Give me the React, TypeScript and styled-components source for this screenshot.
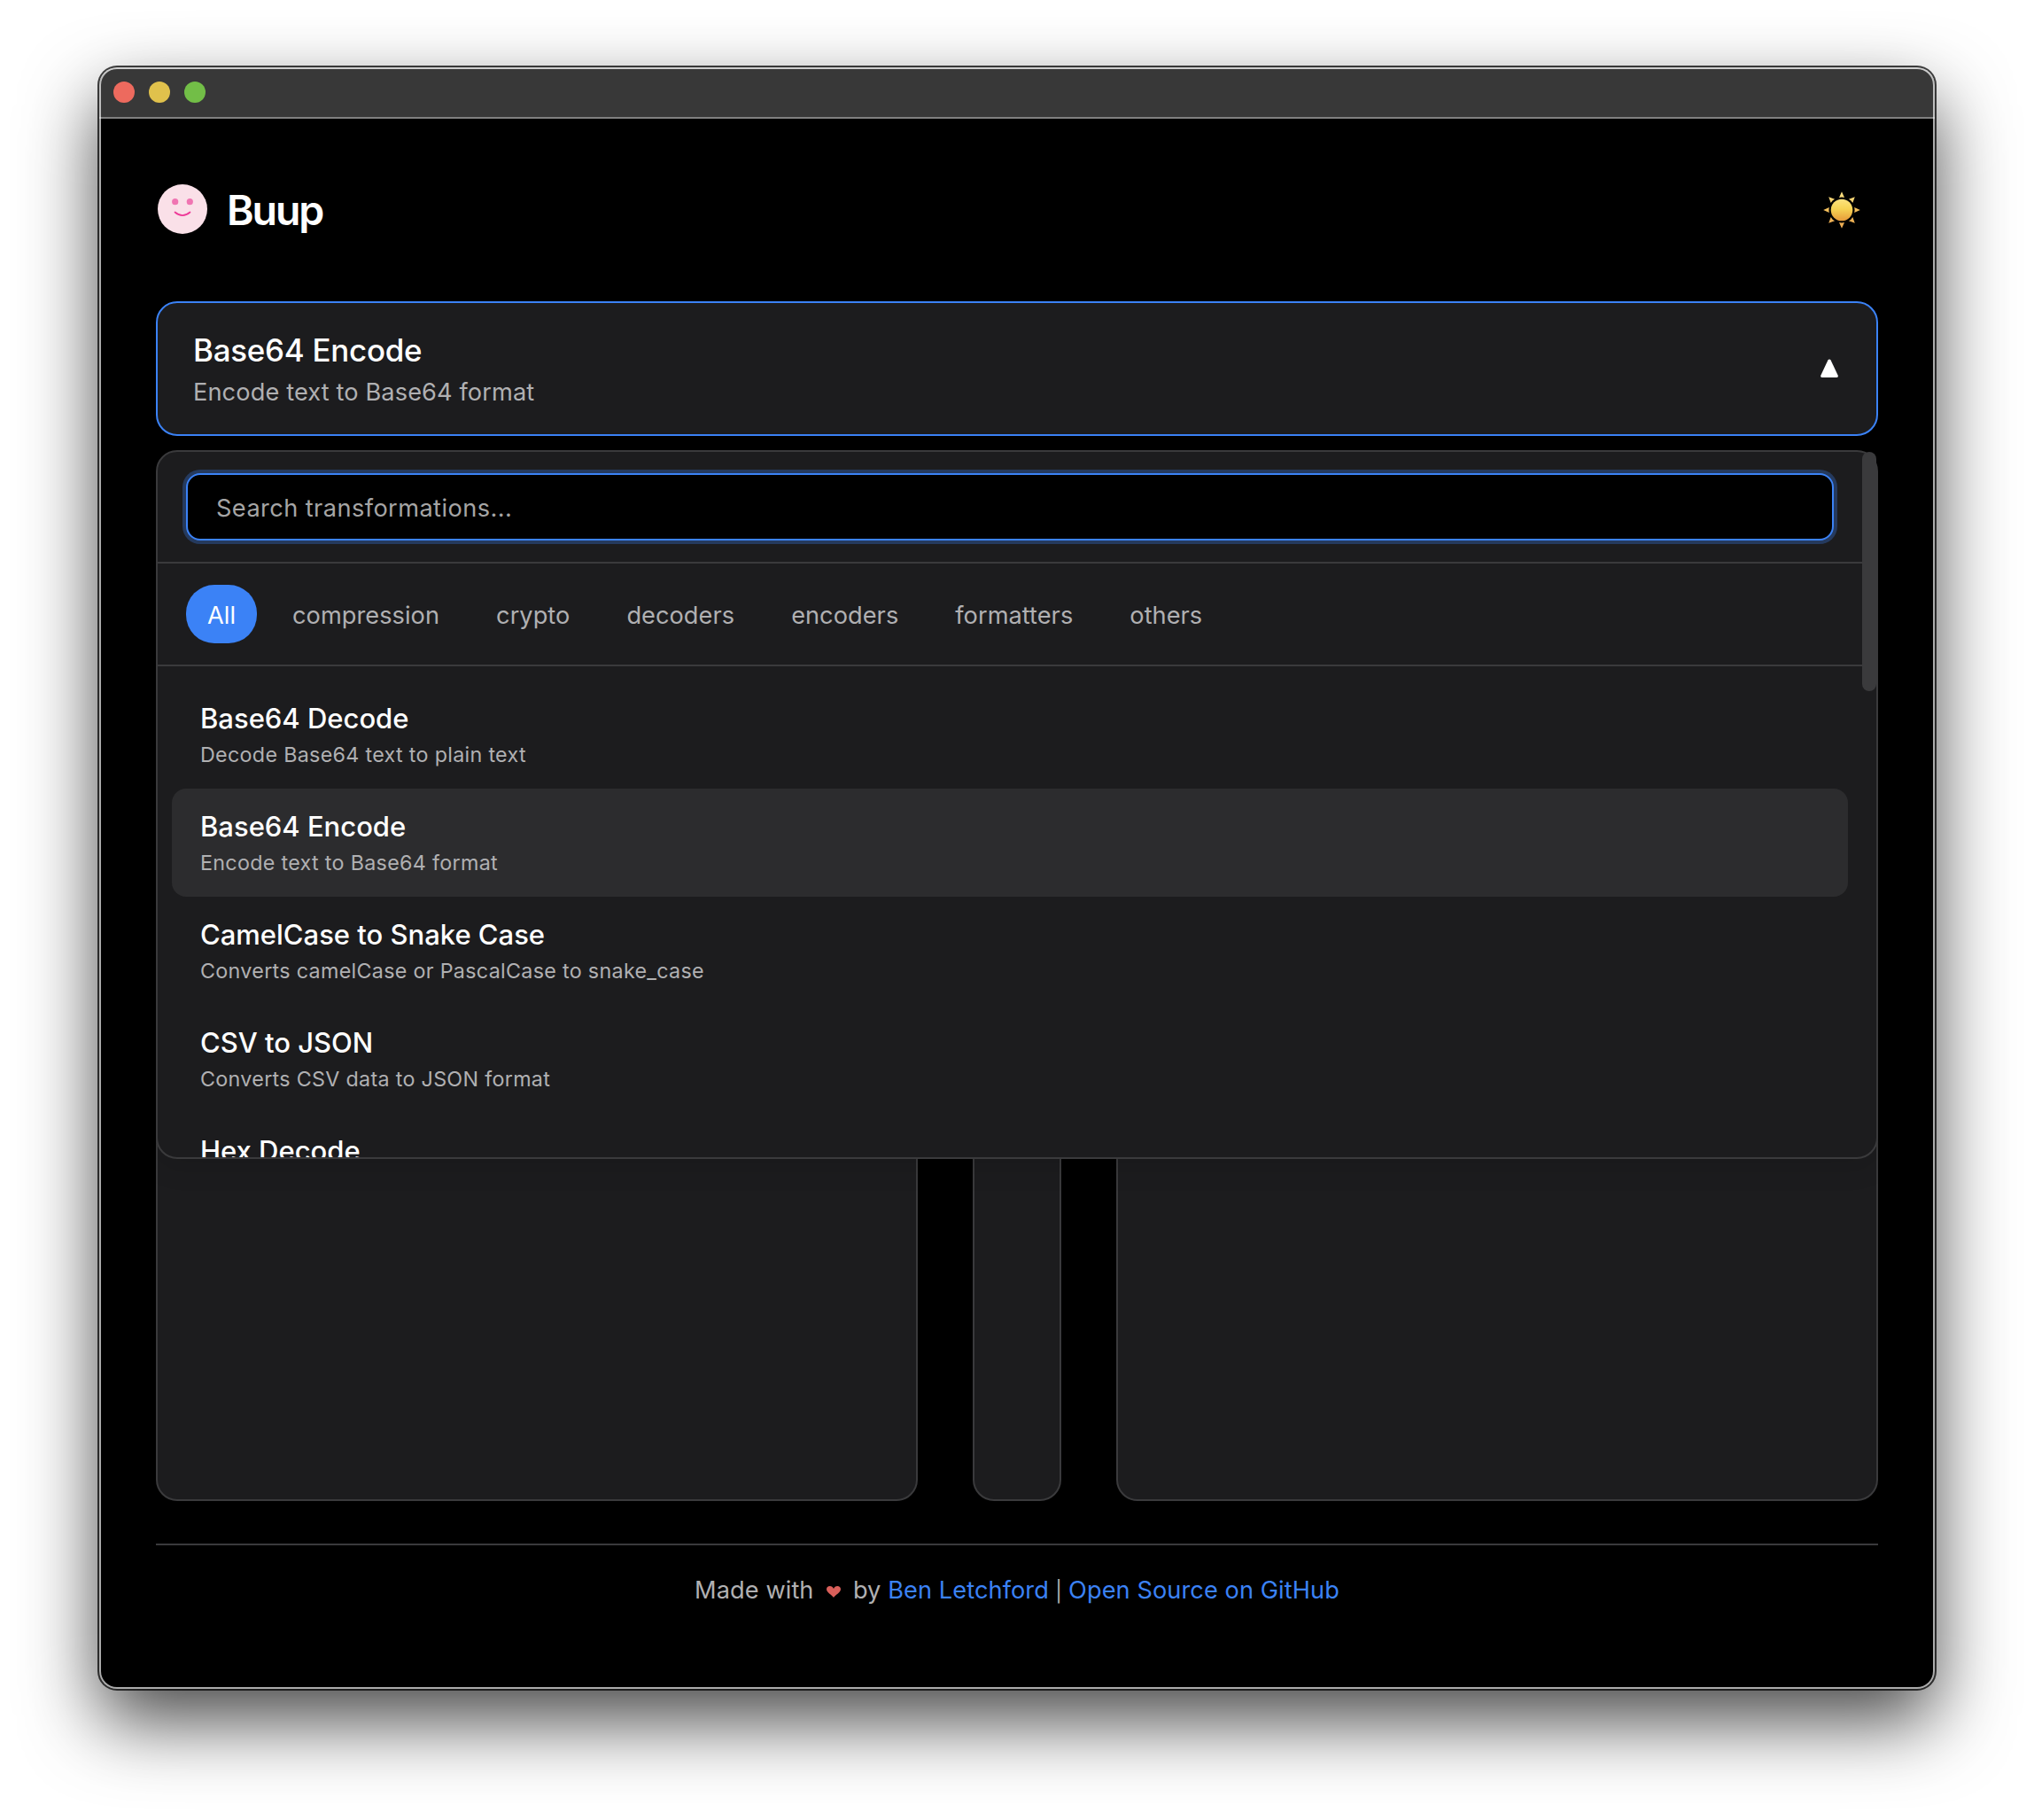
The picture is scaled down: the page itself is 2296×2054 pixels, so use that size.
import React, { useState } from "react";
import styled, { createGlobalStyle, css } from "styled-components";

const color = {
  accent: "#3b82f6",
  surface: "#1c1c1e",
  surfaceActive: "#2c2c2e",
  line: "#3a3a3c",
  text: "#ffffff",
  muted: "#b0b0b2",
  placeholder: "#a5a5a5",
};

const GlobalStyle = createGlobalStyle`
  *, *::before, *::after { box-sizing: border-box; }
  body {
    margin: 0;
    background: #fff;
    font-family: Inter, "Liberation Sans", sans-serif;
    -webkit-font-smoothing: antialiased;
  }
`;

const Desktop = styled.div`
  width: 2296px;
  height: 2054px;
  padding: 76px 112px 148px;
  display: flex;
  overflow: hidden;
  background: #fff;
`;

const Window = styled.div`
  position: relative;
  flex: 1;
  display: flex;
  flex-direction: column;
  border-radius: 20px;
  background: #000;
  box-shadow: 0 0 0 2px rgba(0, 0, 0, 0.74), 0 36px 84px rgba(0, 0, 0, 0.72);

  &::after {
    content: "";
    position: absolute;
    inset: 0;
    border-radius: inherit;
    box-shadow: inset 0 0 0 2px rgba(255, 255, 255, 0.67);
    pointer-events: none;
  }
`;

const TitleBar = styled.div`
  height: 58px;
  display: flex;
  align-items: center;
  gap: 16px;
  padding-left: 16px;
  border-top: 2px solid #6c6c6c;
  border-bottom: 2px solid #808080;
  border-radius: 20px 20px 0 0;
  background: #383838;
`;

const WindowButton = styled.span<{ $fill: string }>`
  width: 24px;
  height: 24px;
  margin-top: -2px;
  border-radius: 50%;
  background: ${(p) => p.$fill};
`;

const Content = styled.div`
  flex: 1;
  display: flex;
  flex-direction: column;
  padding: 74px 64px 92px;
`;

const Header = styled.header`
  height: 56px;
  display: flex;
  align-items: center;
  justify-content: space-between;
  margin-bottom: 76px;
`;

const Brand = styled.div`
  display: flex;
  align-items: center;
  gap: 22px;
  padding-left: 2px;
`;

const BrandName = styled.h1`
  margin: 0;
  padding-top: 2px;
  font-size: 46.5px;
  font-weight: 600;
  line-height: 56px;
  letter-spacing: -2.1px;
  color: ${color.text};
`;

const ThemeButton = styled.button`
  display: flex;
  margin: 2px 0 0;
  padding: 0 20px;
  border: 0;
  background: none;
`;

const SelectorArea = styled.div`
  position: relative;
  z-index: 1;
`;

const Selector = styled.div`
  height: 152px;
  display: flex;
  align-items: center;
  justify-content: space-between;
  padding: 0 43px 0 40px;
  border: 2px solid ${color.accent};
  border-radius: 24px;
  background: ${color.surface};
`;

const SelectorTitle = styled.div`
  font-size: 34.9px;
  font-weight: 500;
  line-height: 54px;
  letter-spacing: -0.24px;
  color: ${color.text};
`;

const SelectorHint = styled.div`
  font-size: 27.2px;
  line-height: 42px;
  letter-spacing: 0.11px;
  color: ${color.muted};
`;

const Dropdown = styled.div`
  position: absolute;
  top: calc(100% + 16px);
  left: 0;
  right: 0;
  height: 800px;
  display: flex;
  border: 2px solid ${color.line};
  border-radius: 24px;
  background: ${color.surface};
  box-shadow: 0 8px 32px rgba(0, 0, 0, 0.12);
`;

const DropdownBody = styled.div`
  flex: 1;
  overflow: hidden;
  border-radius: 22px 0 0 22px;
`;

const ScrollThumb = styled.div`
  width: 16px;
  height: 270px;
  border-radius: 8px;
  background: ${color.line};
`;

const SearchSection = styled.div`
  padding: 24px 32px;
  border-bottom: 2px solid ${color.line};
`;

const SearchInput = styled.input`
  display: block;
  width: 100%;
  height: 76px;
  padding: 2px 32px 0;
  border: 2px solid ${color.accent};
  border-radius: 16px;
  outline: none;
  background: #000;
  box-shadow: 0 0 0 4px rgba(59, 130, 246, 0.3);
  font: 400 27.2px Inter, "Liberation Sans", sans-serif;
  letter-spacing: 0.42px;
  color: ${color.text};

  &::placeholder {
    color: ${color.placeholder};
    opacity: 1;
  }
`;

const Categories = styled.div`
  display: flex;
  gap: 16px;
  padding: 24px 32px;
  border-bottom: 2px solid ${color.line};
`;

const Category = styled.button<{ $active: boolean }>`
  height: 66px;
  padding: 2px 24px 0;
  border: 0;
  border-radius: 32px;
  background: none;
  font: 400 27.2px Inter, "Liberation Sans", sans-serif;
  letter-spacing: 0.04px;
  color: ${color.muted};

  ${(p) =>
    p.$active &&
    css`
      background: ${color.accent};
      color: ${color.text};
    `}
`;

const List = styled.ul`
  margin: 0;
  padding: 16px;
  list-style: none;
`;

const Item = styled.li<{ $selected: boolean }>`
  height: 122px;
  display: flex;
  flex-direction: column;
  justify-content: center;
  padding: 0 32px;
  border-radius: 16px;
  background: ${(p) => (p.$selected ? color.surfaceActive : "transparent")};
`;

const ItemTitle = styled.div`
  font-size: 31px;
  font-weight: 500;
  line-height: 45px;
  letter-spacing: -0.01px;
  color: ${color.text};
`;

const ItemHint = styled.div`
  font-size: 23.3px;
  line-height: 37px;
  letter-spacing: 0.3px;
  color: ${color.muted};
`;

const Panels = styled.div`
  flex: 1;
  display: grid;
  grid-template-columns: 1fr 100px 1fr;
  gap: 62px;
  margin-top: 48px;
`;

const Panel = styled.section`
  border: 2px solid ${color.line};
  border-radius: 24px;
  background: ${color.surface};
`;

const Footer = styled.footer`
  height: 72px;
  margin-top: 48px;
  padding-top: 31px;
  border-top: 2px solid ${color.line};
  text-align: center;
  font-size: 27.2px;
  line-height: 40px;
  letter-spacing: 0.07px;
  color: ${color.muted};
`;

const FooterLink = styled.a`
  color: ${color.accent};
  text-decoration: none;
`;

const Divider = styled.span`
  margin: 0 -0.5px;
  font-size: 23px;
`;

const HeartIcon = styled.svg`
  width: 16px;
  height: 13px;
  margin: 0 6.5px;
  vertical-align: 1px;
`;

const Logo = () => (
  <svg width="56" height="56" viewBox="0 0 56 56">
    <circle cx="28" cy="28" r="28" fill="#fae0e8" />
    <circle cx="19.7" cy="19.7" r="3.6" fill="#f075b2" />
    <circle cx="36.3" cy="19.7" r="3.6" fill="#f075b2" />
    <path d="M19.5 31.5Q28 38.7 36.5 31.5" fill="none" stroke="#ee3a98" strokeWidth="1.7" strokeLinecap="round" />
  </svg>
);

const Sun = () => (
  <svg width="42" height="42" viewBox="-21 -21 42 42">
    <defs>
      <linearGradient id="disc" x1="0" y1="0" x2="0" y2="1">
        <stop offset="0" stopColor="#fbe27e" />
        <stop offset="0.45" stopColor="#f6d353" />
        <stop offset="1" stopColor="#e79a3a" />
      </linearGradient>
      <linearGradient id="ray" gradientUnits="userSpaceOnUse" x1="0" y1="-20" x2="0" y2="20">
        <stop offset="0" stopColor="#fbe283" />
        <stop offset="0.5" stopColor="#f3bf5c" />
        <stop offset="1" stopColor="#eba951" />
      </linearGradient>
    </defs>
    <circle r="12.3" fill="url(#disc)" />
    <path
      fill="url(#ray)"
      d="M0-20.8L3-14.1Q0-15-3-14.1ZM0 20.8L3 14.1Q0 15-3 14.1ZM-20.8 0L-14.1-3Q-15 0-14.1 3ZM20.8 0L14.1-3Q15 0 14.1 3ZM-14.8-14.8L-7.9-12.3Q-10.800-10.800-12.300-7.900ZM14.800-14.800L7.900-12.300Q10.800-10.800 12.300-7.900ZM-14.800 14.800L-7.900 12.300Q-10.800 10.800-12.300 7.900ZM14.800 14.800L7.900 12.300Q10.800 10.800 12.300 7.900Z"
    />
  </svg>
);

const Caret = () => (
  <svg width="20" height="22" viewBox="0 0 20 22">
    <path
      d="M8.4 1.6Q10-.4 11.6 1.6L19.6 18.6Q20.4 21 18 21H2Q-.4 21 .4 18.6Z"
      fill="#fff"
    />
  </svg>
);

const categories = ["All", "compression", "crypto", "decoders", "encoders", "formatters", "others"];

const transformations = [
  { name: "Base64 Decode", hint: "Decode Base64 text to plain text" },
  { name: "Base64 Encode", hint: "Encode text to Base64 format" },
  { name: "CamelCase to Snake Case", hint: "Converts camelCase or PascalCase to snake_case" },
  { name: "CSV to JSON", hint: "Converts CSV data to JSON format" },
  { name: "Hex Decode", hint: "" },
];

export default function App() {
  const [category, setCategory] = useState("All");
  const [selected, setSelected] = useState(1);
  const current = transformations[selected];

  return (
    <Desktop>
      <GlobalStyle />
      <Window>
        <TitleBar>
          <WindowButton $fill="#ed6a5e" />
          <WindowButton $fill="#e0c14c" />
          <WindowButton $fill="#72be47" />
        </TitleBar>
        <Content>
          <Header>
            <Brand>
              <Logo />
              <BrandName>Buup</BrandName>
            </Brand>
            <ThemeButton>
              <Sun />
            </ThemeButton>
          </Header>
          <SelectorArea>
            <Selector>
              <div>
                <SelectorTitle>{current.name}</SelectorTitle>
                <SelectorHint>{current.hint}</SelectorHint>
              </div>
              <Caret />
            </Selector>
            <Dropdown>
              <DropdownBody>
                <SearchSection>
                  <SearchInput placeholder="Search transformations..." />
                </SearchSection>
                <Categories>
                  {categories.map((name) => (
                    <Category key={name} $active={name === category} onClick={() => setCategory(name)}>
                      {name}
                    </Category>
                  ))}
                </Categories>
                <List>
                  {transformations.map((item, i) => (
                    <Item key={item.name} $selected={i === selected} onClick={() => setSelected(i)}>
                      <ItemTitle>{item.name}</ItemTitle>
                      <ItemHint>{item.hint || "\u00a0"}</ItemHint>
                    </Item>
                  ))}
                </List>
              </DropdownBody>
              <ScrollThumb />
            </Dropdown>
          </SelectorArea>
          <Panels>
            <Panel />
            <Panel />
            <Panel />
          </Panels>
          <Footer>
            Made with{" "}
            <HeartIcon viewBox="0 0 16 13">
              <path
                d="M8 13C6.6 10.4 0 7.6 0 3.6C0 1.4 1.6 0 3.7 0C5.6 0 7.3 1 8 3C8.7 1 10.4 0 12.3 0C14.4 0 16 1.4 16 3.6C16 7.6 9.4 10.4 8 13Z"
                fill="#d95f5a"
              />
            </HeartIcon>{" "}
            by <FooterLink>Ben Letchford</FooterLink> <Divider>|</Divider>{" "}
            <FooterLink>Open Source on GitHub</FooterLink>
          </Footer>
        </Content>
      </Window>
    </Desktop>
  );
}
